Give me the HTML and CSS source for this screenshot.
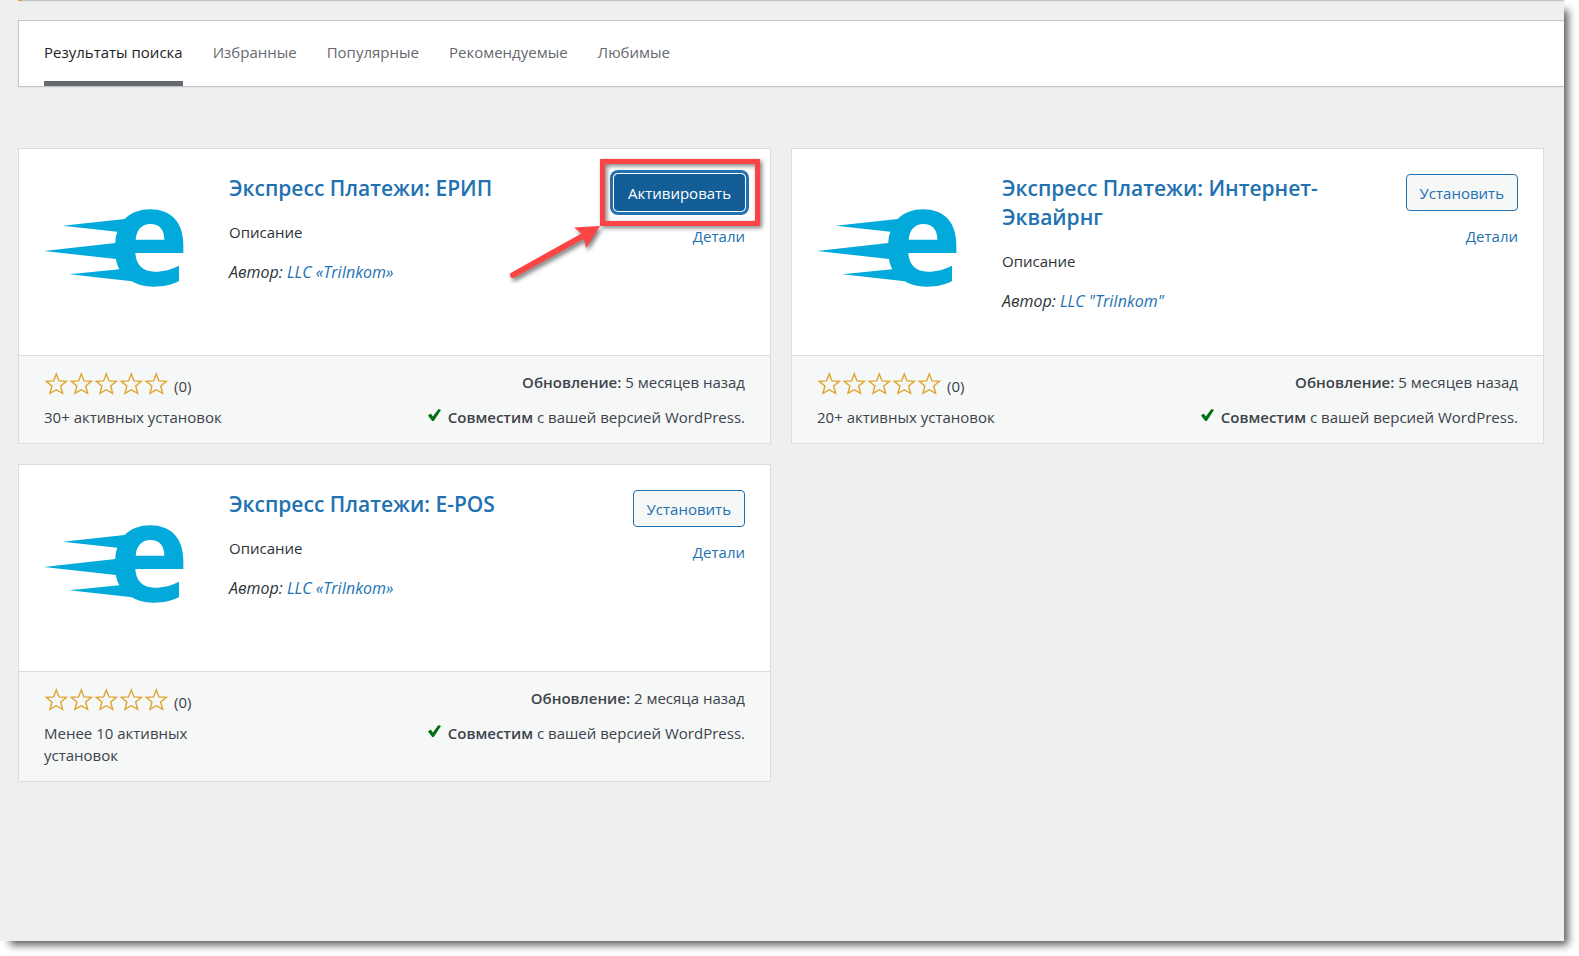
FILE: index.html
```
<!DOCTYPE html>
<html lang="ru">
<head>
<meta charset="utf-8">
<meta name="viewport" content="width=device-width, initial-scale=1">
<title>Добавить плагины</title>
<link rel="stylesheet" href="styles.css">
</head>
<body>
<svg class="defs" aria-hidden="true">
  <symbol id="logo" viewBox="42 -48 480 480">
    <path fill="#02a9db" fill-rule="evenodd" d="M98 107L284 87C303 68 330 58 360 58C425 58 460 98 460 165V189H316C318 225 338 245 375 245C402 245 425 238 447 227V273C425 285 402 290 370 290C345 290 322 284 306 274L118 253L268 238C263 228 259 218 258 207L42 183L256 159C256 147 258 136 262 125ZM317 149H403C403 119 388 102 361 102C335 102 319 120 317 149Z"/>
  </symbol>
  <symbol id="star" viewBox="0 0 25 25">
    <path fill="none" stroke="#dda52f" stroke-width="1.4" d="M12.3 3L15 9.9L22.4 10.3L16.7 15L18.6 22.3L12.3 18.7L6 22.3L7.9 15L2.2 10.3L9.6 9.9Z"/>
  </symbol>
  <symbol id="check" viewBox="0 0 13 12">
    <path fill="#007017" d="M0 6.5L2.8 4.6L4.8 7.4L10.5 0L13 1L5.8 12H4.2Z"/>
  </symbol>
</svg>
<main class="frame">
  <div class="notice-edge"></div>
  <nav class="filter">
    <a class="tab tab-current" href="#search">Результаты поиска</a>
    <a class="tab" href="#featured">Избранные</a>
    <a class="tab" href="#popular">Популярные</a>
    <a class="tab" href="#recommended">Рекомендуемые</a>
    <a class="tab" href="#favorites">Любимые</a>
  </nav>
  <section class="cards">
    <article class="card">
      <div class="card-top">
        <svg class="logo" aria-hidden="true"><use href="#logo"/></svg>
        <div class="info">
          <h3 class="name"><a href="#erip">Экспресс Платежи: ЕРИП</a></h3>
          <p class="text">Описание</p>
          <p class="text author">Автор: <a href="#author">LLC «TriInkom»</a></p>
        </div>
        <div class="actions">
          <div class="spot">
            <button class="button button-primary" type="button">Активировать</button>
            <span class="callout"></span>
            <svg class="arrow" viewBox="0 0 100 70" aria-hidden="true">
              <path d="M8 55L78 16" stroke="#fd4445" stroke-width="6" stroke-linecap="round"/>
              <path d="M95 6L69 7.500L77 14L79 19L81 28Z" fill="#fd4445"/>
            </svg>
          </div>
          <a href="#details">Детали</a>
        </div>
      </div>
      <div class="card-bottom">
        <div class="rating"><svg class="star"><use href="#star"/></svg><svg class="star"><use href="#star"/></svg><svg class="star"><use href="#star"/></svg><svg class="star"><use href="#star"/></svg><svg class="star"><use href="#star"/></svg><span class="votes">(0)</span></div>
        <div class="updated"><strong>Обновление:</strong> 5 месяцев назад</div>
        <div class="installs">30+ активных установок</div>
        <div class="compat"><svg class="check"><use href="#check"/></svg><strong>Совместим</strong> с вашей версией WordPress.</div>
      </div>
    </article>
    <article class="card">
      <div class="card-top">
        <svg class="logo" aria-hidden="true"><use href="#logo"/></svg>
        <div class="info">
          <h3 class="name"><a href="#acquiring">Экспресс Платежи: Интернет-Эквайрнг</a></h3>
          <p class="text">Описание</p>
          <p class="text author">Автор: <a href="#author">LLC "TriInkom"</a></p>
        </div>
        <div class="actions">
          <button class="button" type="button">Установить</button>
          <a href="#details">Детали</a>
        </div>
      </div>
      <div class="card-bottom">
        <div class="rating"><svg class="star"><use href="#star"/></svg><svg class="star"><use href="#star"/></svg><svg class="star"><use href="#star"/></svg><svg class="star"><use href="#star"/></svg><svg class="star"><use href="#star"/></svg><span class="votes">(0)</span></div>
        <div class="updated"><strong>Обновление:</strong> 5 месяцев назад</div>
        <div class="installs">20+ активных установок</div>
        <div class="compat"><svg class="check"><use href="#check"/></svg><strong>Совместим</strong> с вашей версией WordPress.</div>
      </div>
    </article>
    <article class="card">
      <div class="card-top">
        <svg class="logo" aria-hidden="true"><use href="#logo"/></svg>
        <div class="info">
          <h3 class="name"><a href="#epos">Экспресс Платежи: E-POS</a></h3>
          <p class="text">Описание</p>
          <p class="text author">Автор: <a href="#author">LLC «TriInkom»</a></p>
        </div>
        <div class="actions">
          <button class="button" type="button">Установить</button>
          <a href="#details">Детали</a>
        </div>
      </div>
      <div class="card-bottom">
        <div class="rating"><svg class="star"><use href="#star"/></svg><svg class="star"><use href="#star"/></svg><svg class="star"><use href="#star"/></svg><svg class="star"><use href="#star"/></svg><svg class="star"><use href="#star"/></svg><span class="votes">(0)</span></div>
        <div class="updated"><strong>Обновление:</strong> 2 месяца назад</div>
        <div class="installs">Менее 10 активных установок</div>
        <div class="compat"><svg class="check"><use href="#check"/></svg><strong>Совместим</strong> с вашей версией WordPress.</div>
      </div>
    </article>
  </section>
</main>
</body>
</html>
```
FILE: styles.css
```
* {
  box-sizing: border-box;
}

body {
  margin: 0;
  background: #fff;
  color: #3c434a;
  font: 15px/24px "Open Sans", "Noto Sans", sans-serif;
}

a {
  color: #2271b1;
  text-decoration: none;
}

strong {
  font-weight: 600;
}

.defs {
  display: none;
}

.frame {
  min-height: calc(100vh - 15px);
  margin: 0 15px 15px 0;
  padding-left: 18px;
  background: #efefef;
  box-shadow: 7px 7px 8px -3px rgba(0, 0, 0, 0.65);
}

.notice-edge {
  height: 1px;
  margin-bottom: 19px;
  border-left: 4px solid #dba617;
  background: #c3c4c7;
  box-shadow: 0 1px 1px rgba(0, 0, 0, 0.04);
}

.filter {
  display: flex;
  flex-wrap: wrap;
  gap: 0 30px;
  padding-left: 25px;
  border: 1px solid #c3c4c7;
  border-right: 0;
  background: #fff;
  box-shadow: 0 1px 1px rgba(0, 0, 0, 0.04);
}

.tab {
  padding: 19px 0 17px;
  border-bottom: 5px solid transparent;
  color: #646970;
}

.tab-current {
  border-bottom-color: #646970;
  color: #1d2327;
}

.cards {
  display: grid;
  grid-template-columns: repeat(2, minmax(0, 1fr));
  gap: 20px;
  padding: 61px 20px 40px 0;
}

.card {
  display: flex;
  flex-direction: column;
  border: 1px solid #dcdcde;
  background: #fff;
}

.card-top {
  display: flex;
  flex: 1;
  padding: 25px 25px 21px;
}

.logo {
  flex: none;
  width: 160px;
  height: 160px;
  margin-right: 25px;
}

.info {
  flex: 1;
  min-width: 0;
  color: #2c3338;
}

.name {
  max-width: 340px;
  margin: 0 0 17px;
  font-size: 21px;
  font-weight: 600;
  line-height: 29px;
}

.text {
  margin: 0 0 16px;
}

.author {
  font-size: 16px;
  font-style: italic;
}

.actions {
  display: flex;
  flex: none;
  flex-direction: column;
  align-items: flex-end;
  gap: 13px;
}

.button {
  display: block;
  height: 37px;
  padding: 0 13px;
  border: 1px solid #2271b1;
  border-radius: 4px;
  background: #f6f7f7;
  color: #2271b1;
  font: inherit;
}

.button-primary {
  border-color: #135e96;
  background: #135e96;
  box-shadow: 0 0 0 1px #fff, 0 0 0 4px #2271b1;
  color: #fff;
}

.spot {
  position: relative;
}

.callout {
  position: absolute;
  inset: -15px -15px -15px -14px;
  border: 5px solid #fd4445;
  filter: drop-shadow(2px 2px 2px rgba(0, 0, 0, 0.5));
  pointer-events: none;
}

.arrow {
  position: absolute;
  top: 46px;
  left: -109px;
  width: 100px;
  height: 70px;
  filter: drop-shadow(2px 3px 2px rgba(0, 0, 0, 0.5));
  pointer-events: none;
}

.card-bottom {
  display: grid;
  grid-template-columns: 3fr 7fr;
  row-gap: 11px;
  padding: 15px 25px;
  border-top: 1px solid #dcdcde;
  background: #f6f7f7;
  line-height: 22px;
}

.rating {
  display: flex;
  height: 24px;
}

.star {
  flex: none;
  width: 25px;
  height: 25px;
}

.votes {
  padding: 4px 0 0 5px;
}

.updated,
.compat {
  text-align: right;
}

.check {
  width: 13px;
  height: 12px;
  margin: 0 7px 2px 0;
}
```
